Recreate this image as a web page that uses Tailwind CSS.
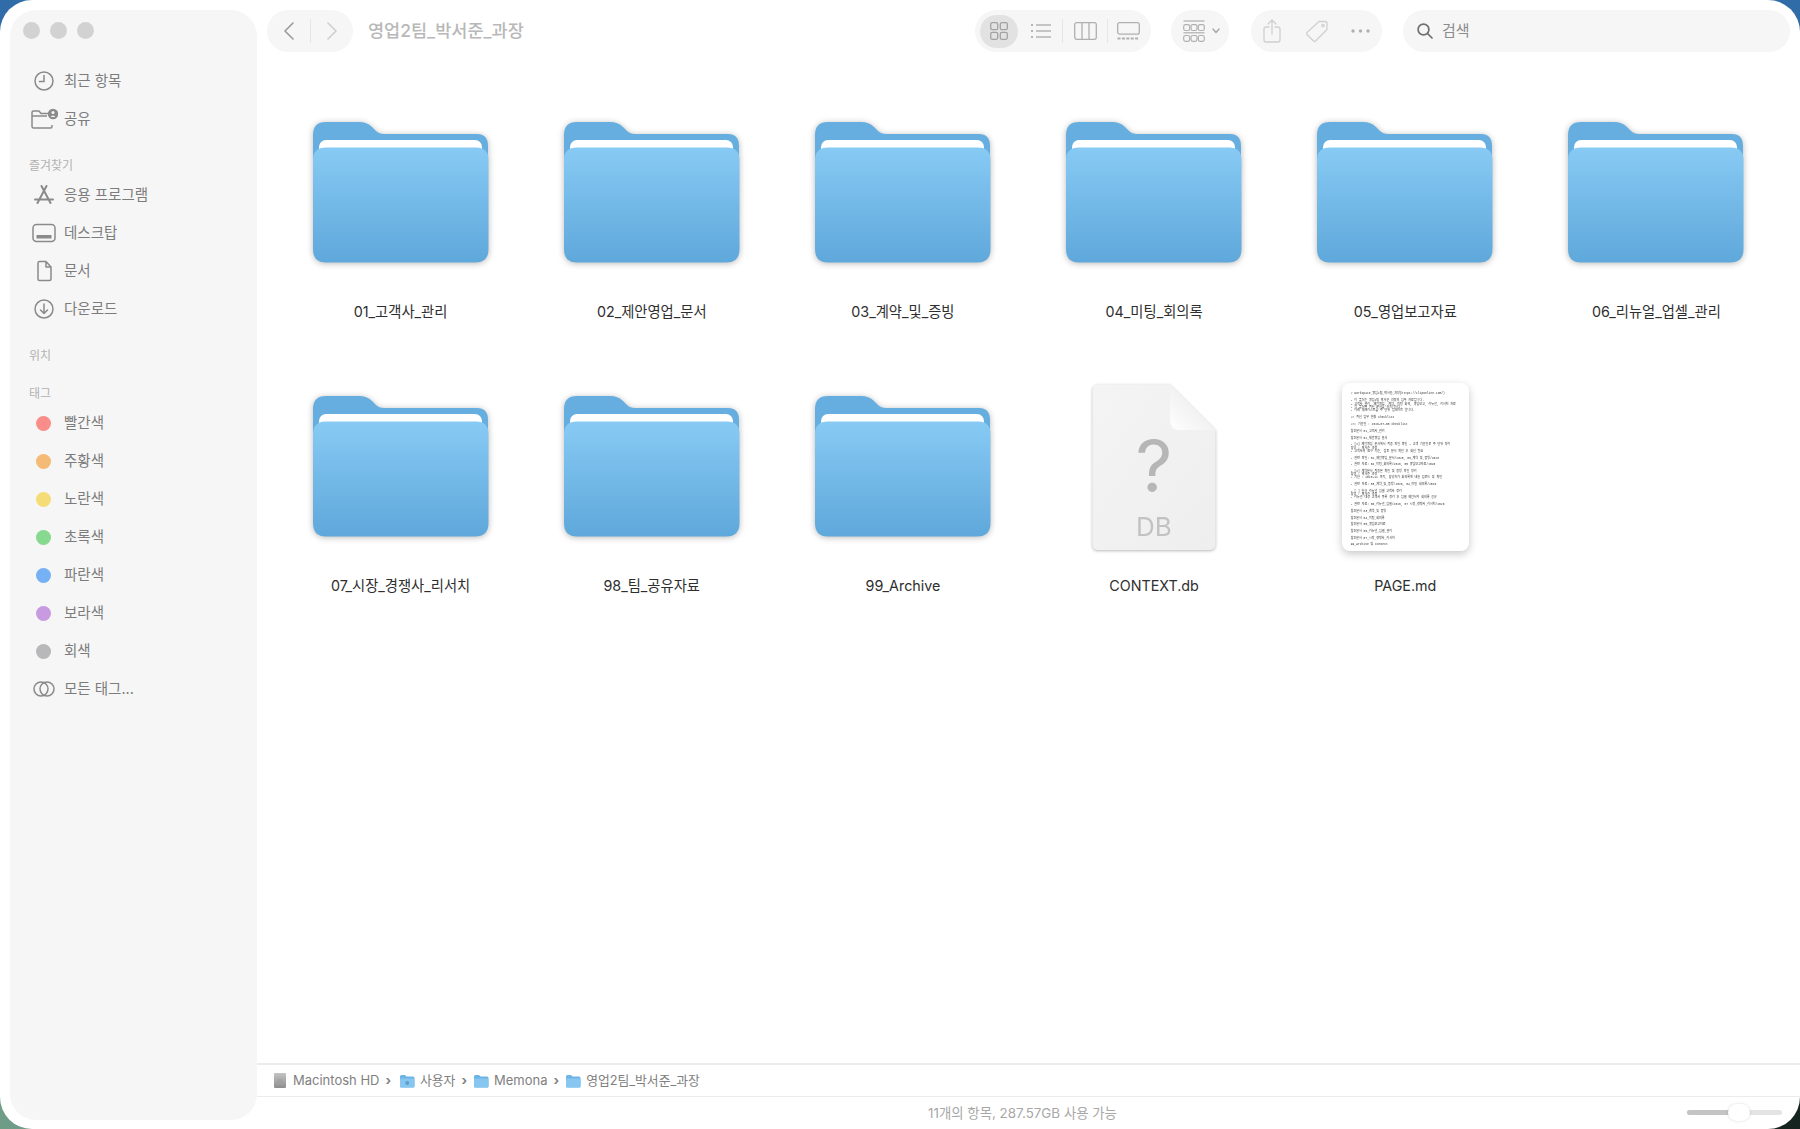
<!DOCTYPE html>
<html lang="ko">
<head>
    <meta charset="UTF-8">
    <title>영업2팀_박서준_과장</title>
    <script src="https://cdn.jsdelivr.net/npm/@tailwindcss/browser@4"></script>
</head>
<body class="w-[1800px] h-[1129px] overflow-hidden font-['Inter','Noto_Sans_CJK_KR',sans-serif] bg-[conic-gradient(#2f6ca8_0_25%,#16241f_25%_50%,#6f9c86_50%_75%,#2f6ca8_75%_100%)]">
    <!-- shared icon definitions -->
    <svg class="absolute w-0 h-0">
        <defs>
            <linearGradient id="folderFront" x1="0" y1="0" x2="0" y2="1">
                <stop offset="0" stop-color="#87caf4"/>
                <stop offset="1" stop-color="#5fa8db"/>
            </linearGradient>
            <linearGradient id="docBody" x1="0" y1="0" x2="1" y2="1">
                <stop offset="0" stop-color="#f4f4f4"/>
                <stop offset="1" stop-color="#eeeeee"/>
            </linearGradient>
            <linearGradient id="docFold" x1="0" y1="1" x2="1" y2="0">
                <stop offset="0" stop-color="#ffffff"/>
                <stop offset="1" stop-color="#e4e4e4"/>
            </linearGradient>
            <symbol id="folder" viewBox="0 0 176 142">
                <path d="M0 13Q0 0 13 0H46Q54 0 59 5L63 9Q66 12 71 12H164Q175 12 175 24V60H0Z" fill="#66aedf"/>
                <rect x="6" y="18" width="163" height="30" rx="7" fill="#ffffff"/>
                <path d="M13 25.500H163Q175.500 25.500 175.500 38V127Q175.500 140.500 162 140.500H13Q0 140.500 0 127V38Q0 25.500 13 25.500Z" fill="url(#folderFront)"/>
            </symbol>
            <symbol id="miniFolder" viewBox="0 0 16 14">
                <path d="M1 2.500Q1 1 2.500 1H6L7.500 2.500H14Q15.500 2.500 15.500 4V12Q15.500 13.500 14 13.500H2.500Q1 13.500 1 12Z" fill="#6db4e4"/>
                <rect x="1" y="4.500" width="14.500" height="9" rx="1.200" fill="#86c6f0"/>
            </symbol>
        </defs>
    </svg>

    <div class="w-full h-full flex rounded-[32px] bg-white pl-[10px] pt-[10px] pb-[9px]">
        <!-- Sidebar -->
        <aside class="w-[247px] h-full shrink-0 rounded-[26px] bg-[#f6f6f6] text-[14.500px] text-[#7c7c7c]">
            <div class="flex gap-[10px] pl-[13px] pt-[12px] h-[52px]">
                <span class="size-[17px] rounded-full bg-[#d2d2d2]"></span>
                <span class="size-[17px] rounded-full bg-[#d2d2d2]"></span>
                <span class="size-[17px] rounded-full bg-[#d2d2d2]"></span>
            </div>

            <div>
                <div class="h-[38px] flex items-center pl-[20px] gap-[6px]">
                    <svg class="w-[28px] h-[22px]" viewBox="0 0 28 22" fill="none" stroke="#8a8a8a" stroke-width="1.500" stroke-linecap="round"><circle cx="14" cy="11" r="9"/><path d="M14 5.500V11.500H9.500"/></svg>
                    <span>최근 항목</span>
                </div>
                <div class="h-[38px] flex items-center pl-[20px] gap-[6px]">
                    <svg class="w-[28px] h-[22px]" viewBox="0 0 28 22" fill="none" stroke="#8a8a8a" stroke-width="1.500"><path d="M22 17V18.500Q22 20 20.500 20H3.500Q2 20 2 18.500V4.500Q2 3 3.500 3H9L11 5.500H18M2 8H17"/><circle cx="23" cy="6" r="5.200" fill="#8a8a8a" stroke="none"/><circle cx="23" cy="4.500" r="1.500" fill="#f6f6f6" stroke="none"/><path d="M20.500 9Q23 5.800 25.500 9" fill="#f6f6f6" stroke="none"/></svg>
                    <span>공유</span>
                </div>
            </div>

            <div class="h-[21px] mt-[17px] pl-[19px] flex items-center text-[12px] text-[#b2b2b2]">즐겨찾기</div>

            <div>
                <div class="h-[38px] flex items-center pl-[20px] gap-[6px]">
                    <svg class="w-[28px] h-[22px]" viewBox="0 0 28 22" fill="none" stroke="#8a8a8a" stroke-width="2" stroke-linecap="round"><path d="M16.500 2L7.500 19M11.500 2L20.500 19M5 15.500H23"/></svg>
                    <span>응용 프로그램</span>
                </div>
                <div class="h-[38px] flex items-center pl-[20px] gap-[6px]">
                    <svg class="w-[28px] h-[22px]" viewBox="0 0 28 22" fill="none" stroke="#8a8a8a" stroke-width="1.500"><rect x="3" y="2.500" width="22" height="17" rx="3.500"/><rect x="6.500" y="13" width="15" height="3.500" fill="#8a8a8a" stroke="none"/></svg>
                    <span>데스크탑</span>
                </div>
                <div class="h-[38px] flex items-center pl-[20px] gap-[6px]">
                    <svg class="w-[28px] h-[22px]" viewBox="0 0 28 22" fill="none" stroke="#8a8a8a" stroke-width="1.500" stroke-linejoin="round"><path d="M8 3Q8 1.500 9.500 1.500H16L21 7V19Q21 20.500 19.500 20.500H9.500Q8 20.500 8 19ZM16 1.500V7H21"/></svg>
                    <span>문서</span>
                </div>
                <div class="h-[38px] flex items-center pl-[20px] gap-[6px]">
                    <svg class="w-[28px] h-[22px]" viewBox="0 0 28 22" fill="none" stroke="#8a8a8a" stroke-width="1.500" stroke-linecap="round" stroke-linejoin="round"><circle cx="14" cy="11" r="9"/><path d="M14 6V15.500M10.500 12L14 15.500L17.500 12"/></svg>
                    <span>다운로드</span>
                </div>
            </div>

            <div class="h-[21px] mt-[17px] pl-[19px] flex items-center text-[12px] text-[#b2b2b2]">위치</div>
            <div class="h-[21px] mt-[17px] pl-[19px] flex items-center text-[12px] text-[#b2b2b2]">태그</div>

            <div>
                <div class="h-[38px] flex items-center pl-[26px] gap-[13px]"><span class="size-[15px] rounded-full bg-[#f88d8a]"></span><span>빨간색</span></div>
                <div class="h-[38px] flex items-center pl-[26px] gap-[13px]"><span class="size-[15px] rounded-full bg-[#f5bb76]"></span><span>주황색</span></div>
                <div class="h-[38px] flex items-center pl-[26px] gap-[13px]"><span class="size-[15px] rounded-full bg-[#f5dc76]"></span><span>노란색</span></div>
                <div class="h-[38px] flex items-center pl-[26px] gap-[13px]"><span class="size-[15px] rounded-full bg-[#86d98f]"></span><span>초록색</span></div>
                <div class="h-[38px] flex items-center pl-[26px] gap-[13px]"><span class="size-[15px] rounded-full bg-[#76b0f5]"></span><span>파란색</span></div>
                <div class="h-[38px] flex items-center pl-[26px] gap-[13px]"><span class="size-[15px] rounded-full bg-[#c89ae0]"></span><span>보라색</span></div>
                <div class="h-[38px] flex items-center pl-[26px] gap-[13px]"><span class="size-[15px] rounded-full bg-[#b8b8ba]"></span><span>회색</span></div>
                <div class="h-[38px] flex items-center pl-[20px] gap-[6px]">
                    <svg class="w-[28px] h-[22px]" viewBox="0 0 28 22" fill="none" stroke="#8a8a8a" stroke-width="1.500"><circle cx="11" cy="11" r="7"/><circle cx="17" cy="11" r="7"/></svg>
                    <span>모든 태그...</span>
                </div>
            </div>
        </aside>

        <!-- Main -->
        <main class="flex-1 min-w-0 flex flex-col mb-[-9px]">
            <!-- Toolbar -->
            <header class="h-[52px] shrink-0 flex items-start pl-[10px] pr-[10px]">
                <div class="w-[86px] h-[42px] rounded-full bg-[#f6f6f6] flex items-center justify-center gap-[15px]">
                    <svg class="w-[12px] h-[20px]" viewBox="0 0 12 20" fill="none" stroke="#9a9a9a" stroke-width="1.600" stroke-linecap="round" stroke-linejoin="round"><path d="M10 2L2 10L10 18"/></svg>
                    <span class="w-px h-[24px] bg-[#e6e6e6]"></span>
                    <svg class="w-[12px] h-[20px]" viewBox="0 0 12 20" fill="none" stroke="#cfcfcf" stroke-width="1.600" stroke-linecap="round" stroke-linejoin="round"><path d="M2 2L10 10L2 18"/></svg>
                </div>
                <h1 class="ml-[15px] h-[42px] leading-[42px] text-[17.500px] font-medium text-[#b8b8b8]">영업2팀_박서준_과장</h1>

                <div class="ml-auto w-[176px] h-[42px] rounded-full bg-[#f6f6f6] flex items-center pl-[5px]">
                    <span class="w-[38px] h-[33px] rounded-full bg-[#e2e2e2] flex items-center justify-center">
                        <svg class="size-[18px]" viewBox="0 0 18 18" fill="none" stroke="#a2a2a2" stroke-width="1.300"><rect x="0.700" y="0.700" width="7" height="7" rx="1.500"/><rect x="10.300" y="0.700" width="7" height="7" rx="1.500"/><rect x="0.700" y="10.300" width="7" height="7" rx="1.500"/><rect x="10.300" y="10.300" width="7" height="7" rx="1.500"/></svg>
                    </span>
                    <svg class="w-[20px] h-[16px] ml-[13px]" viewBox="0 0 20 16" fill="none" stroke="#b4b4b4" stroke-width="1.300"><path d="M5 2H20M5 8H20M5 14H20"/><path d="M0 2H2M0 8H2M0 14H2" stroke-width="2"/></svg>
                    <span class="w-px h-[24px] bg-[#e6e6e6] ml-[11px]"></span>
                    <svg class="w-[23px] h-[18px] ml-[11px]" viewBox="0 0 23 18" fill="none" stroke="#b0b0b0" stroke-width="1.300"><rect x="0.700" y="0.700" width="21.600" height="16.600" rx="2"/><path d="M8 1V17M15 1V17"/></svg>
                    <span class="w-px h-[24px] bg-[#e6e6e6] ml-[10px]"></span>
                    <svg class="w-[23px] h-[18px] ml-[9px]" viewBox="0 0 23 18" fill="none" stroke="#b0b0b0" stroke-width="1.300"><rect x="0.700" y="0.700" width="21.600" height="11.500" rx="2"/><path d="M0.500 16.500H22.500" stroke-width="2.200" stroke-dasharray="3 1.400"/></svg>
                </div>

                <div class="ml-[20px] w-[58px] h-[42px] rounded-full bg-[#f6f6f6] flex items-center pl-[12px] gap-[7px]">
                    <svg class="w-[22px] h-[22px]" viewBox="0 0 22 22" fill="none" stroke="#b0b0b0" stroke-width="1.200"><path d="M0.500 1H21.500" /><rect x="0.700" y="4.700" width="6" height="5.800" rx="1.800"/><rect x="8" y="4.700" width="6" height="5.800" rx="1.800"/><rect x="15.300" y="4.700" width="6" height="5.800" rx="1.800"/><path d="M0.500 12.800H21.500"/><rect x="0.700" y="15.500" width="6" height="5.800" rx="1.800"/><rect x="8" y="15.500" width="6" height="5.800" rx="1.800"/><rect x="15.300" y="15.500" width="6" height="5.800" rx="1.800"/></svg>
                    <svg class="w-[8px] h-[6px]" viewBox="0 0 8 6" fill="none" stroke="#a8a8a8" stroke-width="1.400" stroke-linecap="round" stroke-linejoin="round"><path d="M1 1L4 4.500L7 1"/></svg>
                </div>

                <div class="ml-[22px] w-[131px] h-[42px] rounded-full bg-[#f6f6f6] flex items-center pl-[12px]">
                    <svg class="w-[20px] h-[24px]" viewBox="0 0 20 24" fill="none" stroke="#d0d0d0" stroke-width="1.300" stroke-linecap="round" stroke-linejoin="round"><path d="M6 8H3Q1 8 1 10V21Q1 23 3 23H15Q17 23 17 21V10Q17 8 15 8H12M9 15V1M5 5L9 1L13 5"/></svg>
                    <svg class="w-[24px] h-[24px] ml-[22px]" viewBox="0 0 24 24" fill="none" stroke="#d0d0d0" stroke-width="1.300" stroke-linejoin="round"><path d="M14 2.500H20Q22 2.500 22 4.500V10.500L10.500 22Q9.500 23 8.500 22L2 15.500Q1 14.500 2 13.500Z"/><circle cx="18" cy="6.500" r="1.200"/></svg>
                    <svg class="w-[19px] h-[4px] ml-[22px]" viewBox="0 0 19 4" fill="#b0b0b0"><circle cx="2" cy="2" r="1.700"/><circle cx="9.500" cy="2" r="1.700"/><circle cx="17" cy="2" r="1.700"/></svg>
                </div>

                <div class="ml-[21px] w-[387px] h-[42px] rounded-full bg-[#f6f6f6] flex items-center pl-[14px] gap-[9px] text-[15px] text-[#8c8c8c]">
                    <svg class="size-[16px]" viewBox="0 0 16 16" fill="none" stroke="#707070" stroke-width="1.700" stroke-linecap="round"><circle cx="6.500" cy="6.500" r="5.400"/><path d="M10.500 10.500L15 15"/></svg>
                    <span>검색</span>
                </div>
            </header>

            <!-- Files -->
            <section class="flex-1 min-h-0 px-[18px] pt-[43px] grid grid-cols-6 auto-rows-[274px] text-[14.300px] text-[#2e2e2e]">
                <div class="flex flex-col items-center">
                    <div class="h-[176px] flex items-center justify-center"><svg class="w-[176px] h-[142px] drop-shadow-[0_1px_3px_rgba(0,0,0,0.28)]"><use href="#folder"/></svg></div>
                    <p class="mt-[21px] h-[20px] leading-[20px]">01_고객사_관리</p>
                </div>
                <div class="flex flex-col items-center">
                    <div class="h-[176px] flex items-center justify-center"><svg class="w-[176px] h-[142px] drop-shadow-[0_1px_3px_rgba(0,0,0,0.28)]"><use href="#folder"/></svg></div>
                    <p class="mt-[21px] h-[20px] leading-[20px]">02_제안영업_문서</p>
                </div>
                <div class="flex flex-col items-center">
                    <div class="h-[176px] flex items-center justify-center"><svg class="w-[176px] h-[142px] drop-shadow-[0_1px_3px_rgba(0,0,0,0.28)]"><use href="#folder"/></svg></div>
                    <p class="mt-[21px] h-[20px] leading-[20px]">03_계약_및_증빙</p>
                </div>
                <div class="flex flex-col items-center">
                    <div class="h-[176px] flex items-center justify-center"><svg class="w-[176px] h-[142px] drop-shadow-[0_1px_3px_rgba(0,0,0,0.28)]"><use href="#folder"/></svg></div>
                    <p class="mt-[21px] h-[20px] leading-[20px]">04_미팅_회의록</p>
                </div>
                <div class="flex flex-col items-center">
                    <div class="h-[176px] flex items-center justify-center"><svg class="w-[176px] h-[142px] drop-shadow-[0_1px_3px_rgba(0,0,0,0.28)]"><use href="#folder"/></svg></div>
                    <p class="mt-[21px] h-[20px] leading-[20px]">05_영업보고자료</p>
                </div>
                <div class="flex flex-col items-center">
                    <div class="h-[176px] flex items-center justify-center"><svg class="w-[176px] h-[142px] drop-shadow-[0_1px_3px_rgba(0,0,0,0.28)]"><use href="#folder"/></svg></div>
                    <p class="mt-[21px] h-[20px] leading-[20px]">06_리뉴얼_업셀_관리</p>
                </div>
                <div class="flex flex-col items-center">
                    <div class="h-[176px] flex items-center justify-center"><svg class="w-[176px] h-[142px] drop-shadow-[0_1px_3px_rgba(0,0,0,0.28)]"><use href="#folder"/></svg></div>
                    <p class="mt-[21px] h-[20px] leading-[20px]">07_시장_경쟁사_리서치</p>
                </div>
                <div class="flex flex-col items-center">
                    <div class="h-[176px] flex items-center justify-center"><svg class="w-[176px] h-[142px] drop-shadow-[0_1px_3px_rgba(0,0,0,0.28)]"><use href="#folder"/></svg></div>
                    <p class="mt-[21px] h-[20px] leading-[20px]">98_팀_공유자료</p>
                </div>
                <div class="flex flex-col items-center">
                    <div class="h-[176px] flex items-center justify-center"><svg class="w-[176px] h-[142px] drop-shadow-[0_1px_3px_rgba(0,0,0,0.28)]"><use href="#folder"/></svg></div>
                    <p class="mt-[21px] h-[20px] leading-[20px]">99_Archive</p>
                </div>

                <!-- unknown type document -->
                <div class="flex flex-col items-center">
                    <div class="h-[176px] flex items-center justify-center">
                        <svg class="w-[124px] h-[167px] drop-shadow-[0_1.500px_1.500px_rgba(0,0,0,0.28)]" viewBox="0 0 124 167">
                            <path d="M6 0.500H78L123.500 46V160Q123.500 166 117 166H6Q0.500 166 0.500 160V6Q0.500 0.500 6 0.500Z" fill="url(#docBody)"/>
                            <path d="M78 0.500L123.500 46H88Q78 46 78 36Z" fill="url(#docFold)"/>
                            <text x="62" y="108" text-anchor="middle" font-size="72" fill="#b6b6b6" font-family="Inter, sans-serif">?</text>
                            <text x="62" y="152" text-anchor="middle" font-size="26" fill="#c2c2c2" font-family="Inter, sans-serif">DB</text>
                        </svg>
                    </div>
                    <p class="mt-[21px] h-[20px] leading-[20px]">CONTEXT.db</p>
                </div>

                <!-- markdown preview -->
                <div class="flex flex-col items-center">
                    <div class="h-[176px] flex items-center justify-center">
                        <div class="w-[127px] h-[168px] rounded-[8px] bg-white shadow-[0_3px_8px_rgba(0,0,0,0.22)] px-[9px] pt-[9px] font-['Liberation_Mono','Noto_Sans_CJK_KR',monospace] text-[3px] leading-[3.300px] text-[#333] whitespace-nowrap blur-[0.400px]">
                            <p># Workspace_영업2팀_박서준_과장(https://cliponline.com/)</p>
                            <p class="mt-[4px]">- 이 폴더는 영업2팀 박서준 과장의 업무 자료입니다.</p>
                            <p>- 고객사 관리, 제안영업, 계약, 미팅 회의, 영업보고, 리뉴얼, 리서치 자료</p>
                            <p>- 각 폴더별 최신 문서를 유지합니다.</p>
                            <p>- 아래 체크리스트를 주 단위 업데이트 합니다.</p>
                            <p class="mt-[4px]">## 최신 업무 현황 Checklist</p>
                            <p class="mt-[3.400px]">### 기준일 : 2026-07-08 Checklist</p>
                            <p class="mt-[3.400px]">참조문서 01_고객사_관리</p>
                            <p class="mt-[3.400px]">참조문서 02_제안영업_문서</p>
                            <p class="mt-[3.400px]">- [x] 제안영업 문서에서 최종 파일 확인 - 고객 기준일로 주 단위 정리</p>
                            <p>  담당 : 박서준 과장</p>
                            <p>  - 고객사의 요구 기준, 검토 문서 확인 후 회신 필요</p>
                            <p class="mt-[3.400px]">  - 관련 파일: 02_제안영업_문서/2026, 03_계약_및_증빙/2026</p>
                            <p class="mt-[3.400px]">  - 관련 자료: 04_미팅_회의록/2026, 05_영업보고자료/2026</p>
                            <p class="mt-[3.400px]">- [x] 계약문서 최종본 확인 및 증빙 파일 정리</p>
                            <p>  담당 : 박서준 과장</p>
                            <p>  - 기한 : 2026-11 까지, 담당자가 회의록에 내용 업로드 및 확인</p>
                            <p class="mt-[3.400px]">  - 관련 자료: 03_계약_및_증빙/2026, 04_미팅_회의록/2026</p>
                            <p class="mt-[3.400px]">- [ ] 신규 리뉴얼 업셀 고객사 정리</p>
                            <p>  담당 : 박서준 과장</p>
                            <p>  - 리뉴얼 대상 고객사 목록 정리 후 업셀 제안서와 회의록 공유</p>
                            <p class="mt-[3.400px]">  - 관련 자료: 06_리뉴얼_업셀/2026, 07_시장_경쟁사_리서치/2026</p>
                            <p class="mt-[3.400px]">참조문서 03_계약_및_증빙</p>
                            <p class="mt-[3.400px]">참조문서 04_미팅_회의록</p>
                            <p class="mt-[3.400px]">참조문서 05_영업보고자료</p>
                            <p class="mt-[3.400px]">참조문서 06_리뉴얼_업셀_관리</p>
                            <p class="mt-[3.400px]">참조문서 07_시장_경쟁사_리서치</p>
                            <p class="mt-[3.400px]">99_Archive 및 Context</p>
                        </div>
                    </div>
                    <p class="mt-[21px] h-[20px] leading-[20px]">PAGE.md</p>
                </div>
            </section>

            <!-- Path bar -->
            <div class="h-[34px] shrink-0 border-t-2 border-b border-[#ececec] flex items-center pl-[17px] text-[13px] text-[#808080]">
                <span class="w-[12px] h-[15px] bg-linear-to-b from-[#c4c4c4] to-[#8e8e8e] rounded-[1px] flex items-center justify-center"><span class="size-[4px] rounded-full bg-[#a0a0a0]"></span></span>
                <span class="ml-[7px]">Macintosh HD</span>
                <span class="ml-[6px] font-bold">›</span>
                <svg class="ml-[8px] w-[16px] h-[14px]" viewBox="0 0 16 14"><use href="#miniFolder"/><circle cx="8.200" cy="9" r="2" fill="#5d9fd0"/></svg>
                <span class="ml-[5px] text-[12.800px]">사용자</span>
                <span class="ml-[6px] font-bold">›</span>
                <svg class="ml-[6px] w-[16px] h-[14px]"><use href="#miniFolder"/></svg>
                <span class="ml-[5px]">Memona</span>
                <span class="ml-[6px] font-bold">›</span>
                <svg class="ml-[6px] w-[16px] h-[14px]"><use href="#miniFolder"/></svg>
                <span class="ml-[5px] text-[12.800px]">영업2팀_박서준_과장</span>
            </div>

            <!-- Status bar -->
            <div class="relative h-[32px] shrink-0 flex items-center justify-center pr-[12px] text-[13.400px] text-[#a8a8a8]">
                <span>11개의 항목, 287.57GB 사용 가능</span>
                <div class="absolute left-[1430px] top-[13px] w-[95px] h-[5px] rounded-full bg-[#e4e4e4]">
                    <div class="w-[45px] h-full rounded-l-full bg-[#c4c4c4]"></div>
                    <div class="absolute left-[41px] top-[-6px] w-[22px] h-[17px] rounded-full bg-white shadow-[0_0_3px_rgba(0,0,0,0.15)]"></div>
                </div>
            </div>
        </main>
    </div>
</body>
</html>
